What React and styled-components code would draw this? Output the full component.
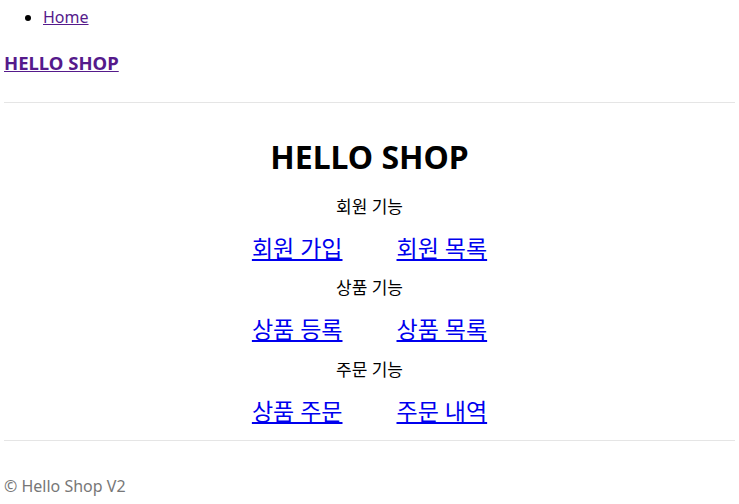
import React from 'react';
import styled, { createGlobalStyle } from 'styled-components';

const GlobalStyle = createGlobalStyle`
  body {
    margin: 0;
    background: #fff;
    font-family: "Noto Sans", "Noto Sans CJK KR", sans-serif;
    color: #000;
  }
`;

const Page = styled.div`
  padding: 0 4px;
`;

const Nav = styled.ul`
  margin: 0;
  padding: 6px 0 0 39px;
  font-size: 16px;
  line-height: 22px;
  a {
    color: #551a8b;
  }
`;

const Brand = styled.a`
  display: inline-block;
  margin-top: 23px;
  font-size: 18.5px;
  font-weight: 700;
  line-height: 24px;
  color: #551a8b;
`;

const Rule = styled.hr`
  margin: ${(p) => p.$top}px 0 0;
  border: 0;
  border-top: 1px solid #e5e5e5;
`;

const Main = styled.main`
  display: flex;
  flex-direction: column;
  align-items: center;
  gap: 14.5px;
  padding-bottom: 14px;
`;

const Title = styled.h1`
  margin: 34px 0 4px;
  font-size: 32px;
  font-weight: 700;
  line-height: 40px;
`;

const Group = styled.section`
  display: flex;
  flex-direction: column;
  align-items: center;
  gap: 15px;
`;

const Label = styled.div`
  font-size: 17px;
  line-height: 22px;
`;

const LinkRow = styled.div`
  display: flex;
  gap: 54px;
  font-size: 23px;
  line-height: 30px;
  a {
    color: #0000ee;
  }
`;

const Footer = styled.footer`
  margin-top: 34px;
  font-size: 16px;
  line-height: 22px;
  color: #777;
`;

const groups = [
  { label: '회원 기능', links: ['회원 가입', '회원 목록'] },
  { label: '상품 기능', links: ['상품 등록', '상품 목록'] },
  { label: '주문 기능', links: ['상품 주문', '주문 내역'] },
];

const App = () => {
  return (
    <>
      <GlobalStyle />
      <Page>
        <Nav>
          <li><a href="#">Home</a></li>
        </Nav>
        <Brand href="#">HELLO SHOP</Brand>
        <Rule $top={27} />
        <Main>
          <Title>HELLO SHOP</Title>
          {groups.map((g) => (
            <Group key={g.label}>
              <Label>{g.label}</Label>
              <LinkRow>
                {g.links.map((l) => (
                  <a key={l} href="#">{l}</a>
                ))}
              </LinkRow>
            </Group>
          ))}
        </Main>
        <Rule $top={0} />
        <Footer>© Hello Shop V2</Footer>
      </Page>
    </>
  );
};

export default App;
